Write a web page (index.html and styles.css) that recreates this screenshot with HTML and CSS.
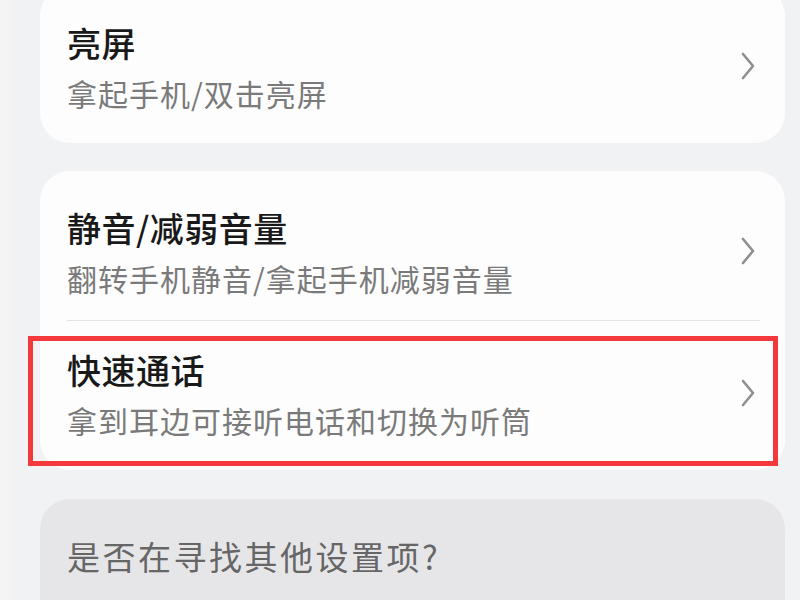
FILE: index.html
```html
<!DOCTYPE html>
<html>
    <head lang="zh">
        <meta charset="UTF-8">
        <title>智能感知</title>
        <link rel="stylesheet" href="styles.css">
    </head>
    <body>
        <div id="page">
            <div class="card card-first">
                <div class="item">
                    <div class="text">
                        <p class="title">亮屏</p>
                        <p class="sub">拿起手机/双击亮屏</p>
                    </div>
                    <span class="arrow"><svg width="14" height="28" viewBox="0 0 14 28"><path d="M2 2 L12 14 L2 26" fill="none" stroke="#8e8e8e" stroke-width="2.6" stroke-linecap="round" stroke-linejoin="round"/></svg></span>
                </div>
            </div>
            <div class="card">
                <div class="item line">
                    <div class="text">
                        <p class="title">静音/减弱音量</p>
                        <p class="sub">翻转手机静音/拿起手机减弱音量</p>
                    </div>
                    <span class="arrow"><svg width="14" height="28" viewBox="0 0 14 28"><path d="M2 2 L12 14 L2 26" fill="none" stroke="#8e8e8e" stroke-width="2.6" stroke-linecap="round" stroke-linejoin="round"/></svg></span>
                </div>
                <div class="item marked">
                    <div class="text">
                        <p class="title">快速通话</p>
                        <p class="sub">拿到耳边可接听电话和切换为听筒</p>
                    </div>
                    <span class="arrow"><svg width="14" height="28" viewBox="0 0 14 28"><path d="M2 2 L12 14 L2 26" fill="none" stroke="#8e8e8e" stroke-width="2.6" stroke-linecap="round" stroke-linejoin="round"/></svg></span>
                    <div class="mark"></div>
                </div>
            </div>
            <div class="card card-more">
                <p class="more">是否在寻找其他设置项?</p>
            </div>
        </div>
    </body>
</html>
```
FILE: styles.css
```css
*{
    margin:0;
    padding:0;
}
html,body{
    height:100%;
    overflow:hidden;
}
body{
    background:linear-gradient(to right, #f4f4f5 12px, #f1f2f4 12px);
    font-family:"Noto Sans CJK SC","Noto Sans",sans-serif;
}
#page{
    padding:0 15px 0 40px;
    display:flex;
    flex-direction:column;
}
.card{
    background-color:#fdfdfd;
    border-radius:30px;
    padding:8px 0;
    margin-bottom:29px;
}
.card-first{
    margin-top:-14px;
    margin-bottom:28px;
}
.item{
    display:flex;
    align-items:center;
    padding:25px 30px 16px 27px;
    position:relative;
}
.item.line{
    border-bottom:1px solid #e3e3e5;
    margin:0 25px 0 27px;
    padding-left:0;
    padding-right:5px;
}
.text{
    flex:1;
}
.title{
    font-size:34px;
    line-height:48px;
    letter-spacing:0.5px;
    font-weight:500;
    color:#191919;
}
.sub{
    font-size:30px;
    line-height:52px;
    letter-spacing:1px;
    color:#7a7a7a;
}
.arrow{
    display:block;
    width:14px;
    height:28px;
    margin-top:-6px;
}
.mark{
    position:absolute;
    left:-12px;
    right:7px;
    top:15px;
    bottom:-4px;
    border:5px solid #f4393d;
}
.card-more{
    background-color:#e6e6e9;
    height:200px;
    padding:33px 27px;
}
.more{
    font-size:33px;
    line-height:48px;
    letter-spacing:2.5px;
    color:#666666;
}
```
